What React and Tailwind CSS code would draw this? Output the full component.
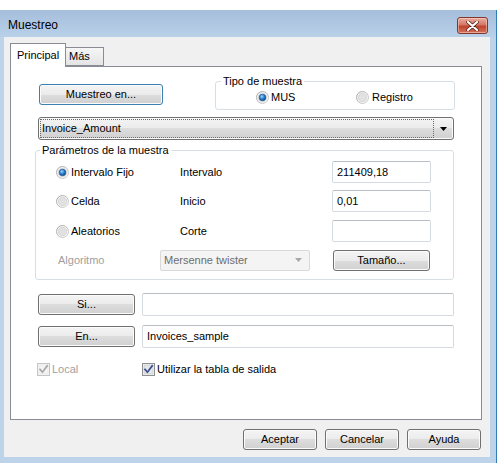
import React from 'react';

// Win7-style push button face
const btnFace =
  'bg-[linear-gradient(to_bottom,#f4f4f4_0%,#ebebeb_50%,#dddddd_50%,#d0d0d0_100%)] shadow-[inset_0_0_0_1px_#fbfbfb]';

const Button = ({ children, className = '', isDefault = false }) => (
  <div
    className={`flex items-center justify-center rounded-[3px] border text-black ${btnFace} ${
      isDefault ? 'border-[#3c7fb1] shadow-[inset_0_0_0_1px_#c4e5f8]' : 'border-[#707070]'
    } ${className}`}
  >
    {children}
  </div>
);

const TextBox = ({ value = '', className = '' }) => (
  <div
    className={`flex items-center rounded-[2px] border border-[#d5dae1] border-t-[#b9bec6] bg-white pl-[4px] text-black ${className}`}
  >
    {value}
  </div>
);

const Radio = ({ checked = false }) => (
  <svg width="13" height="13" viewBox="0 0 13 13" className="shrink-0">
    <defs>
      <linearGradient id="radioRing" x1="0" y1="0" x2="1" y2="1">
        <stop offset="0" stopColor="#a3a3a3" />
        <stop offset="1" stopColor="#d6d6d6" />
      </linearGradient>
      <radialGradient id="radioDot" cx="0.4" cy="0.35" r="0.7">
        <stop offset="0" stopColor="#9fd8fb" />
        <stop offset="0.5" stopColor="#2a84d2" />
        <stop offset="1" stopColor="#0d3f80" />
      </radialGradient>
    </defs>
    <circle cx="6.5" cy="6.5" r="6" fill="#f4f4f4" stroke="url(#radioRing)" strokeWidth="1" />
    <circle cx="6.5" cy="6.5" r="4.2" fill="#e1e1e1" stroke="#cdcdcd" strokeWidth="0.6" />
    {checked && <circle cx="6.5" cy="6.5" r="3.3" fill="url(#radioDot)" stroke="#1b4d8c" strokeWidth="0.6" />}
  </svg>
);

const Check = ({ disabled = false }) => (
  <svg width="13" height="13" viewBox="0 0 13 13" className="shrink-0">
    <rect x="0.5" y="0.5" width="12" height="12" fill="#f6f6f6" stroke={disabled ? '#c5c5c5' : '#8e8f8f'} />
    <rect x="2" y="2" width="9" height="9" fill={disabled ? '#f4f4f4' : '#e4e6ea'} stroke={disabled ? '#e2e2e2' : '#b9bcc2'} strokeWidth="0.5" />
    <path
      d="M3 6.4 L5.4 9.2 L10.2 2.8"
      fill="none"
      stroke={disabled ? '#a8a8a8' : '#3b4f8f'}
      strokeWidth="1.7"
      strokeLinecap="square"
    />
  </svg>
);

const Arrow = ({ color = '#000' }) => (
  <svg width="7" height="4" viewBox="0 0 7 4">
    <path d="M0 0 H7 L3.5 4 Z" fill={color} />
  </svg>
);

export default function App() {
  return (
    <div className="w-[497px] h-[463px] overflow-hidden bg-white pt-[10px] font-['Liberation_Sans',Arial,sans-serif] text-[11px] leading-[13px]">
      <div className="flex h-[453px] flex-col border-r border-[#2f7fb8] bg-[#bcd3ea]">
        {/* title bar */}
        <div className="flex h-[27px] items-start bg-[linear-gradient(to_bottom,#a5bedb,#b9d0e9)] pl-[8px] pr-[8px]">
          <span className="mt-[8px] text-[12px] leading-[14px] text-black">Muestreo</span>
          <div className="ml-auto mt-[7px] flex h-[17px] w-[31px] items-center justify-center rounded-[3px] border border-[#83362a] bg-[linear-gradient(to_bottom,#e9aea3_0%,#d47765_45%,#c0432d_55%,#d2735c_100%)] shadow-[inset_0_0_0_1px_rgba(255,220,210,0.5)]">
            <svg width="13" height="10" viewBox="0 0 13 10">
              <path d="M2 1 L11 9 M11 1 L2 9" stroke="#5a2018" strokeWidth="3.6" strokeLinecap="round" />
              <path d="M2 1 L11 9 M11 1 L2 9" stroke="#ffffff" strokeWidth="2.2" strokeLinecap="round" />
            </svg>
          </div>
        </div>

        {/* client area */}
        <div className="ml-[4px] flex h-[420px] w-[486px] flex-col bg-[#f0f0f0] pt-[6px]">
          {/* tabs */}
          <div className="flex h-[23px] items-end pl-[6px]">
            <div className="relative z-10 -mb-px flex h-[24px] w-[56px] items-start border border-b-0 border-[#898c95] bg-white pl-[6px] pt-[5px] text-black">
              Principal
            </div>
            <div className="flex h-[19px] w-[38px] items-center border border-l-0 border-[#898c95] bg-[linear-gradient(to_bottom,#f6f6f6,#e4e4e4)] pl-[3px] text-black">
              Más
            </div>
          </div>

          {/* tab page */}
          <div className="ml-[6px] flex h-[354px] w-[472px] flex-col border border-[#898c95] bg-white pl-[27px] pt-[8px]">
            <div className="flex items-start">
              <Button isDefault className="ml-[1px] mt-[9px] h-[21px] w-[124px]">
                Muestreo en...
              </Button>
              <fieldset className="ml-[52px] w-[240px] rounded-[3px] border border-[#d5dfe5]">
                <legend className="ml-[5px] px-[2px] text-black">Tipo de muestra</legend>
                <div className="flex h-[18px] items-center pl-[40px]">
                  <div className="flex w-[100px] items-center gap-[2px]">
                    <Radio checked />
                    <span>MUS</span>
                  </div>
                  <div className="flex items-center gap-[3px]">
                    <Radio />
                    <span>Registro</span>
                  </div>
                </div>
                <div className="h-[3px]" />
              </fieldset>
            </div>

            {/* field combo */}
            <div className={`mt-[7px] flex h-[23px] w-[416px] items-center rounded-[3px] border border-[#707070] ${btnFace} pl-[1px]`}>
              <div className="flex h-[19px] w-[394px] items-center border border-dotted border-[#6a6a6a] pl-[1px] text-black">
                Invoice_Amount
              </div>
              <div className="flex flex-1 items-center justify-center">
                <Arrow />
              </div>
            </div>

            {/* sampling parameters */}
            <fieldset className="-ml-[3px] mt-[4px] w-[419px] rounded-[3px] border border-[#d5dfe5] pb-[8px]">
              <legend className="ml-[4px] px-[2px] text-black">Parámetros de la muestra</legend>
              <div className="mt-[4px] flex h-[22px] items-center pl-[20px]">
                <div className="flex w-[124px] items-center gap-[2px]">
                  <Radio checked />
                  <span>Intervalo Fijo</span>
                </div>
                <span className="w-[152px]">Intervalo</span>
                <TextBox value="211409,18" className="h-[22px] w-[99px]" />
              </div>
              <div className="mt-[7px] flex h-[22px] items-center pl-[20px]">
                <div className="flex w-[124px] items-center gap-[2px]">
                  <Radio />
                  <span>Celda</span>
                </div>
                <span className="w-[152px]">Inicio</span>
                <TextBox value="0,01" className="h-[22px] w-[99px]" />
              </div>
              <div className="mt-[8px] flex h-[22px] items-center pl-[20px]">
                <div className="flex w-[124px] items-center gap-[2px]">
                  <Radio />
                  <span>Aleatorios</span>
                </div>
                <span className="w-[152px]">Corte</span>
                <TextBox className="h-[22px] w-[99px]" />
              </div>
              <div className="mt-[7px] flex h-[22px] items-center pl-[22px]">
                <span className="w-[102px] text-[#a0a0a0]">Algoritmo</span>
                <div className="flex h-[21px] w-[150px] items-center rounded-[2px] border border-[#d9d9d9] bg-[#f4f4f4] pl-[3px] pr-[7px] text-[#6d6d6d]">
                  <span>Mersenne twister</span>
                  <span className="ml-auto flex">
                    <Arrow color="#a8a8a8" />
                  </span>
                </div>
                <Button className="ml-[23px] h-[21px] w-[97px]">Tamaño...</Button>
              </div>
            </fieldset>

            <div className="mt-[13px] flex h-[23px] items-center">
              <Button className="h-[21px] w-[97px]">Si...</Button>
              <TextBox className="ml-[7px] h-[23px] w-[312px]" />
            </div>
            <div className="mt-[9px] flex h-[23px] items-center">
              <Button className="h-[21px] w-[97px]">En...</Button>
              <TextBox value="Invoices_sample" className="ml-[7px] h-[23px] w-[312px]" />
            </div>

            <div className="-ml-[1px] mt-[15px] flex h-[13px] items-center">
              <div className="flex w-[105px] items-center gap-[2px] text-[#a0a0a0]">
                <Check disabled />
                <span>Local</span>
              </div>
              <div className="flex items-center gap-[2px] text-black">
                <Check />
                <span>Utilizar la tabla de salida</span>
              </div>
            </div>
          </div>

          {/* dialog buttons */}
          <div className="mt-[9px] flex justify-end gap-[8px] pr-[9px]">
            <Button className="h-[21px] w-[74px]">Aceptar</Button>
            <Button className="h-[21px] w-[74px]">Cancelar</Button>
            <Button className="h-[21px] w-[74px]">Ayuda</Button>
          </div>
        </div>
      </div>
    </div>
  );
}
